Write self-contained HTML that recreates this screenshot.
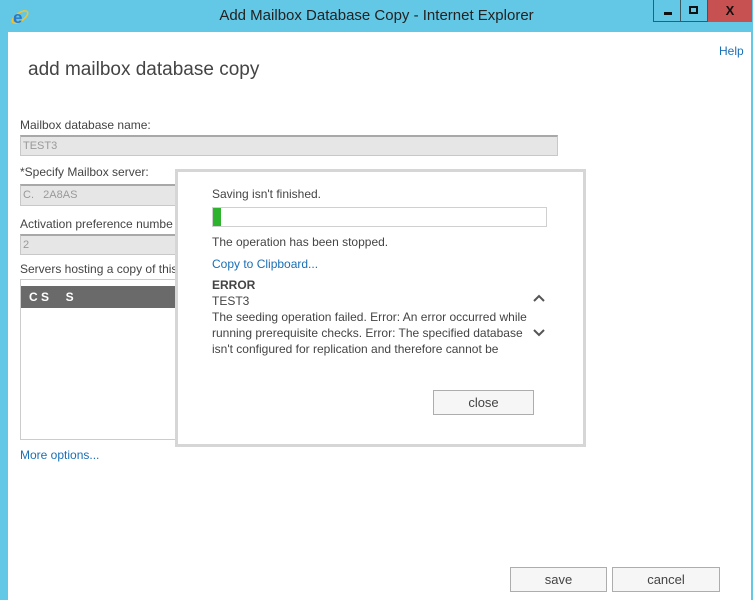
<!DOCTYPE html>
<html><head><style>
*{margin:0;padding:0;box-sizing:border-box}
body{width:753px;height:600px;background:#62c8e6;position:relative;overflow:hidden;font-family:"Liberation Sans",sans-serif;color:#333}
.abs{position:absolute}
#content{left:8px;top:32px;width:743px;height:568px;background:#fff}
.lbl{font-size:12px;color:#444}
.inp{background:#e6e6e6;border:1px solid #c8c8c8;border-top:2px solid #a8a8a8;font-size:11px;color:#999;padding:3px 2px}
.btn{border:1px solid #adadad;background:#f6f6f6;font-size:13px;color:#444;text-align:center}
</style></head><body>
<svg class="abs" style="left:10px;top:6px" width="20" height="20" viewBox="0 0 20 20">
<ellipse cx="10" cy="11" rx="9" ry="4" fill="none" stroke="#f2c230" stroke-width="1.6" transform="rotate(-35 10 11)"/>
<text x="3" y="17" font-size="17" font-family="Liberation Sans" fill="#2a78c8" font-weight="bold">e</text>
</svg>
<div class="abs" style="left:0;top:7px;width:753px;text-align:center;font-size:15px;color:#222">Add Mailbox Database Copy - Internet Explorer</div>
<div class="abs" style="left:653px;top:0;width:28px;height:22px;border:1px solid #3a5a66;border-top:none"></div>
<div class="abs" style="left:664px;top:12px;width:8px;height:3px;background:#111"></div>
<div class="abs" style="left:680px;top:0;width:28px;height:22px;border:1px solid #3a5a66;border-top:none;border-left:none"></div>
<div class="abs" style="left:689px;top:6px;width:9px;height:8px;border:2px solid #111"></div>
<div class="abs" style="left:708px;top:0;width:44px;height:22px;background:#c75050;color:#111;font-weight:bold;font-size:13px;text-align:center;line-height:22px">X</div>
<div class="abs" id="content"></div>
<div class="abs" style="left:719px;top:44px;font-size:12px;color:#1a6fb5">Help</div>
<div class="abs" style="left:28px;top:59px;font-size:19px;color:#444">add mailbox database copy</div>
<div class="abs lbl" style="left:20px;top:118px">Mailbox database name:</div>
<div class="abs inp" style="left:20px;top:135px;width:538px;height:21px">TEST3</div>
<div class="abs lbl" style="left:20px;top:165px">*Specify Mailbox server:</div>
<div class="abs inp" style="left:20px;top:184px;width:160px;height:22px">C.&nbsp;&nbsp;&nbsp;2A8AS</div>
<div class="abs lbl" style="left:20px;top:217px">Activation preference numbe</div>
<div class="abs inp" style="left:20px;top:234px;width:160px;height:21px">2</div>
<div class="abs lbl" style="left:20px;top:262px">Servers hosting a copy of this</div>
<div class="abs" style="left:20px;top:279px;width:160px;height:161px;border:1px solid #ccc"></div>
<div class="abs" style="left:21px;top:286px;width:158px;height:22px;background:#6a6a6a;color:#fff;font-size:12px;font-weight:bold;padding:4px 8px">C S&nbsp;&nbsp;&nbsp;&nbsp;&nbsp;S</div>
<div class="abs" style="left:20px;top:448px;font-size:12px;color:#1a6fb5">More options...</div>
<div class="abs" style="left:175px;top:169px;width:411px;height:278px;background:#fff;border:3px solid #d6d6d6"></div>
<div class="abs lbl" style="left:212px;top:187px">Saving isn't finished.</div>
<div class="abs" style="left:212px;top:207px;width:335px;height:20px;border:1px solid #d0d0d0"></div>
<div class="abs" style="left:213px;top:208px;width:8px;height:18px;background:#2db32d"></div>
<div class="abs lbl" style="left:212px;top:235px">The operation has been stopped.</div>
<div class="abs" style="left:212px;top:257px;font-size:12px;color:#1a6fb5">Copy to Clipboard...</div>
<div class="abs" style="left:212px;top:278px;font-size:12px;font-weight:bold;color:#444">ERROR</div>
<div class="abs lbl" style="left:212px;top:293px;line-height:16px;width:330px">TEST3<br>The seeding operation failed. Error: An error occurred while running prerequisite checks. Error: The specified database isn't configured for replication and therefore cannot be</div>
<svg class="abs" style="left:532px;top:292px" width="14" height="50" viewBox="0 0 14 50"><path d="M2 9 L7 4 L12 9" fill="none" stroke="#555" stroke-width="2"/><path d="M2 38 L7 43 L12 38" fill="none" stroke="#555" stroke-width="2"/></svg>
<div class="abs btn" style="left:433px;top:390px;width:101px;height:25px;line-height:23px">close</div>
<div class="abs btn" style="left:510px;top:567px;width:97px;height:25px;line-height:23px">save</div>
<div class="abs btn" style="left:612px;top:567px;width:108px;height:25px;line-height:23px">cancel</div>
</body></html>
